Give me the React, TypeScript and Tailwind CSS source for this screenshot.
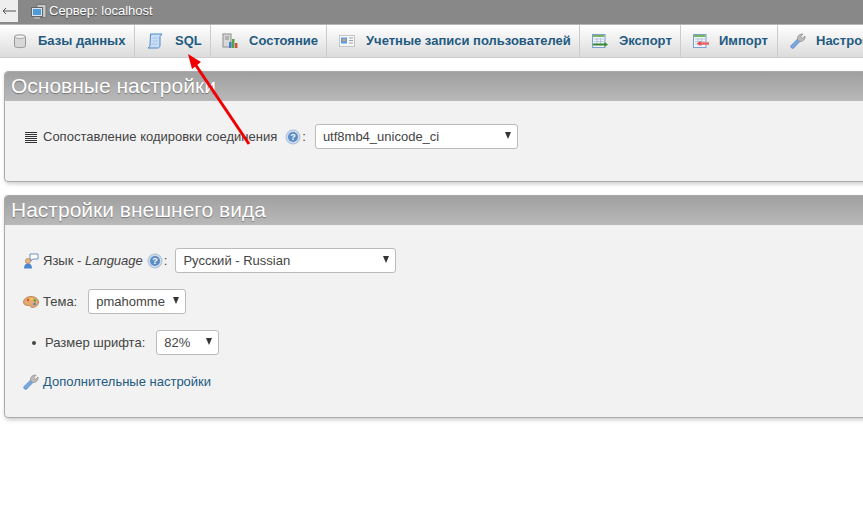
import type { ReactNode } from "react";

const DbIcon = () => (
  <svg width="16" height="16" viewBox="0 0 16 16">
    <path d="M2.5 3.5C2.5 1.6 13.5 1.6 13.5 3.5V13C13.5 15.2 2.5 15.2 2.5 13Z" fill="#d8d8d8" stroke="#9a9a9a" />
    <ellipse cx="8" cy="3.7" rx="5" ry="1.8" fill="#f4f4f4" stroke="#aaaaaa" />
  </svg>
);

const SqlIcon = () => (
  <svg width="16" height="16" viewBox="0 0 16 16">
    <path d="M3.5 1H15L13 3.5V12C13 14 12 15 10.5 15H1C2.5 14 3 13 3 12Z" fill="#c9def5" stroke="#4f86c6" />
    <path d="M5.5 5H11M5.5 8H11M5 11H10.5" stroke="#a4c4e6" />
  </svg>
);

const StatusIcon = () => (
  <svg width="16" height="16" viewBox="0 0 16 16">
    <rect x="1" y="1" width="8" height="13" fill="#d8d8d8" stroke="#8c8c8c" />
    <path d="M3 4H7M3 6H7" stroke="#8c8c8c" />
    <rect x="7" y="9" width="2.5" height="6" fill="#3f7fd0" />
    <rect x="10" y="6" width="2.5" height="9" fill="#53a447" />
    <rect x="13" y="10" width="2.5" height="5" fill="#d9503f" />
  </svg>
);

const UsersIcon = () => (
  <svg width="16" height="16" viewBox="0 0 16 16">
    <rect x="0.5" y="2.5" width="15" height="11" fill="#f7f7f7" stroke="#c4c4c4" />
    <rect x="2" y="4.5" width="6" height="6" fill="#5b9be0" />
    <circle cx="5" cy="7" r="1.6" fill="#e0a060" />
    <path d="M10 5H14M10 7.5H14M10 10H14" stroke="#9aa4b0" />
  </svg>
);

const TableIcon = ({ color }: { color: string }) => (
  <>
    <rect x="0.5" y="1.5" width="12.5" height="13" fill="#f2f6fb" stroke="#7c9fd0" />
    <rect x="1" y="2" width="11.5" height="2" fill={color} />
    <path d="M2 6H12M2 8.5H12M2 11H12M5 5V13M8.5 5V13" stroke="#a6bedb" strokeWidth="0.8" />
  </>
);

const ExportIcon = () => (
  <svg width="16" height="16" viewBox="0 0 16 16">
    <TableIcon color="#79b65f" />
    <path d="M1 11.5H13" stroke="#3e8a35" strokeWidth="2" />
    <path d="M12.5 9L16 11.5L12.5 14Z" fill="#3e8a35" />
  </svg>
);

const ImportIcon = () => (
  <svg width="16" height="16" viewBox="0 0 16 16">
    <TableIcon color="#79b65f" />
    <path d="M7 10.5H16" stroke="#f06060" strokeWidth="2.4" />
    <path d="M7.5 8L4 10.5L7.5 13Z" fill="#ef3a3a" />
  </svg>
);

const WrenchIcon = () => (
  <svg width="16" height="16" viewBox="0 0 16 16">
    <path d="M0.8 12.8L7.8 5.8L10.2 8.2L3.5 15.2C2.2 16 0.2 14.4 0.8 12.8Z" fill="#7ba7e0" stroke="#4a78b5" strokeWidth="0.6" />
    <path d="M7.5 6.5C7 3 10 0.5 13 1.2L10.8 3.5L12.5 5.2L15 3C15.6 6 13 9 9.7 8.4Z" fill="#bcbcbc" stroke="#7e7e7e" strokeWidth="0.6" />
  </svg>
);

const HelpIcon = () => (
  <svg width="16" height="16" viewBox="0 0 16 16">
    <circle cx="8" cy="8" r="7" fill="#cfdcec" stroke="#a6bdd8" />
    <circle cx="8" cy="8" r="5" fill="#5b8cc4" />
    <text x="8" y="11" textAnchor="middle" fontSize="9" fontWeight="700" fill="#fff" fontFamily="Liberation Sans">?</text>
  </svg>
);

const CollationIcon = () => (
  <svg width="12" height="12" viewBox="0 0 12 12">
    <path d="M0 1.5H12M0 3.5H12M0 5.5H12M0 7.5H12M0 9.5H12M0 11.5H12" stroke="#333" />
  </svg>
);

const LangIcon = () => (
  <svg width="16" height="16" viewBox="0 0 16 16">
    <path d="M7 1H15V6H10L8 8V6H7Z" fill="#fff" stroke="#6d93bf" />
    <circle cx="5" cy="8" r="2.6" fill="#e8b487" stroke="#9a6b3f" strokeWidth="0.5" />
    <path d="M1 15.5C1 12 2.5 10.6 5 10.6C7.5 10.6 9 12 9 15.5Z" fill="#4d86cf" />
  </svg>
);

const ThemeIcon = () => (
  <svg width="16" height="16" viewBox="0 0 16 16">
    <path d="M8 2.5C12.5 2.5 15.5 5 15.5 8C15.5 11 13 13.5 9 13.5C7.5 13.5 8 11.5 6 11.5C3.5 11.5 0.5 11 0.5 8C0.5 5 4 2.5 8 2.5Z" fill="#e3a96f" stroke="#a8703c" strokeWidth="0.7" />
    <circle cx="5" cy="6" r="1.2" fill="#d9503f" />
    <circle cx="8.5" cy="5" r="1.2" fill="#f0d040" />
    <circle cx="12" cy="6.5" r="1.2" fill="#53a447" />
    <circle cx="11.5" cy="10" r="1.2" fill="#3f7fd0" />
  </svg>
);

const tabs: { label: string; icon: ReactNode; className: string }[] = [
  { label: "Базы данных", icon: <DbIcon />, className: "w-[135px] pl-[12px] gap-[10px]" },
  { label: "SQL", icon: <SqlIcon />, className: "w-[76px] pl-[12px] gap-[12px]" },
  { label: "Состояние", icon: <StatusIcon />, className: "w-[116px] pl-[11px] gap-[11px]" },
  { label: "Учетные записи пользователей", icon: <UsersIcon />, className: "w-[253px] pl-[12px] gap-[11px]" },
  { label: "Экспорт", icon: <ExportIcon />, className: "w-[101px] pl-[12px] gap-[11px]" },
  { label: "Импорт", icon: <ImportIcon />, className: "w-[97px] pl-[12px] gap-[10px]" },
  { label: "Настройки", icon: <WrenchIcon />, className: "w-[120px] pl-[12px] gap-[10px]" },
];

function Panel({ title, className, children }: { title: string; className: string; children: ReactNode }) {
  return (
    <section className={`ml-[4px] w-[900px] rounded-[4px] border border-[#aaaaaa] bg-[#f2f2f2] shadow-[1px_2px_4px_rgba(0,0,0,0.2)] ${className}`}>
      <h2 className="h-[29px] rounded-t-[3px] bg-gradient-to-b from-[#a0a0a0] to-[#b9b9b9] pl-[6px] text-[21px] leading-[28px] font-normal text-white [text-shadow:0_1px_1px_rgba(0,0,0,0.35)]">
        {title}
      </h2>
      {children}
    </section>
  );
}

function Select({ value, className }: { value: string; className: string }) {
  return (
    <div className={`relative h-[25px] ${className}`}>
      <select
        defaultValue={value}
        className="h-full w-full appearance-none rounded-[3px] border border-[#bbbbbb] bg-white pl-[7px] text-[13px] text-[#444444] outline-none"
      >
        <option>{value}</option>
      </select>
      <span className="pointer-events-none absolute top-[8px] right-[7px] h-0 w-0 border-x-[3.5px] border-t-[7px] border-x-transparent border-t-[#333333]" />
    </div>
  );
}

export default function App() {
  return (
    <div className="relative h-[532px] w-[863px] overflow-hidden bg-white font-['Liberation_Sans',sans-serif] text-[13px] text-[#444444]">
      <header className="flex h-[25px] items-start border-b border-[#b5b5b5] bg-[#888888]">
        <div className="flex h-[22px] w-[18px] items-center justify-center bg-[#eeeeee]">
          <svg width="14" height="8" viewBox="0 0 14 8">
            <path d="M1 4H14M4 1L1 4L4 7" fill="none" stroke="#555555" />
          </svg>
        </div>
        <svg className="mt-[4px] ml-[13px]" width="16" height="16" viewBox="0 0 16 16">
          <rect x="6" y="0.5" width="9" height="13" fill="#c8c8c8" stroke="#777" />
          <rect x="0.5" y="3.5" width="11" height="9" fill="#dbe6f2" stroke="#666" />
          <rect x="2" y="5" width="8" height="6" fill="#4d9bd8" />
          <rect x="3" y="13" width="6" height="2" fill="#aaa" />
        </svg>
        <span className="mt-[3px] ml-[2px] text-[13px] leading-[16px] text-white [text-shadow:0_1px_1px_rgba(0,0,0,0.5)]">Сервер: localhost</span>
      </header>

      <nav className="flex h-[33px] w-[900px] border-b border-[#cccccc] bg-gradient-to-b from-[#ffffff] to-[#dcdcdc]">
        {tabs.map((tab) => (
          <div key={tab.label} className={`flex shrink-0 items-center border-r border-[#cccccc] ${tab.className}`}>
            {tab.icon}
            <span className="text-[13px] font-bold whitespace-nowrap text-[#235a81]">{tab.label}</span>
          </div>
        ))}
      </nav>

      <Panel title="Основные настройки" className="mt-[13px] h-[111px]">
        <div className="mt-[23px] flex items-center pl-[20px]">
          <CollationIcon />
          <span className="ml-[6px]">Сопоставление кодировки соединения</span>
          <span className="mr-[1px] ml-[8px]"><HelpIcon /></span>
          <span>:</span>
          <Select value="utf8mb4_unicode_ci" className="ml-[9px] w-[203px]" />
        </div>
      </Panel>

      <Panel title="Настройки внешнего вида" className="mt-[13px] h-[223px]">
        <div className="flex flex-col pl-[18px]">
          <div className="mt-[23px] flex items-center">
            <LangIcon />
            <span className="ml-[4px]">Язык - <em>Language</em></span>
            <span className="mx-[1px] ml-[4px]"><HelpIcon /></span>
            <span>:</span>
            <Select value="Русский - Russian" className="ml-[8px] w-[221px]" />
          </div>
          <div className="mt-[16px] flex items-center">
            <ThemeIcon />
            <span className="ml-[4px]">Тема:</span>
            <Select value="pmahomme" className="ml-[11px] w-[98px]" />
          </div>
          <div className="mt-[16px] flex items-center">
            <span className="ml-[9px] h-[4px] w-[4px] rounded-full bg-[#444444]" />
            <span className="ml-[9px]">Размер шрифта:</span>
            <Select value="82%" className="ml-[11px] w-[63px]" />
          </div>
          <div className="mt-[17px] flex items-center">
            <WrenchIcon />
            <span className="ml-[4px] text-[#235a81]">Дополнительные настройки</span>
          </div>
        </div>
      </Panel>

      <svg className="pointer-events-none absolute top-0 left-0" width="863" height="532" viewBox="0 0 863 532">
        <path d="M249 144L195 64" stroke="#f00000" strokeWidth="3" />
        <path d="M188 54L201 62L192 69Z" fill="#f00000" />
      </svg>
    </div>
  );
}
